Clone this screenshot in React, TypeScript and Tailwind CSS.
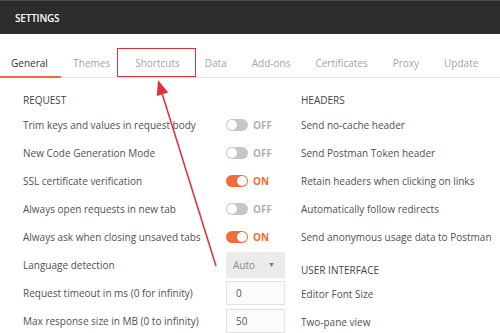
import React from 'react';

const tabs = ['General', 'Themes', 'Shortcuts', 'Data', 'Add-ons', 'Certificates', 'Proxy', 'Update'];

const requestRows: { label: string; on: boolean }[] = [
  { label: 'Trim keys and values in request body', on: false },
  { label: 'New Code Generation Mode', on: false },
  { label: 'SSL certificate verification', on: true },
  { label: 'Always open requests in new tab', on: false },
  { label: 'Always ask when closing unsaved tabs', on: true },
];

const headerRows = [
  'Send no-cache header',
  'Send Postman Token header',
  'Retain headers when clicking on links',
  'Automatically follow redirects',
  'Send anonymous usage data to Postman',
];

const Toggle: React.FC<{ on: boolean }> = ({ on }) => (
  <div className="flex items-center gap-[5px]">
    <div
      className={
        on
          ? 'w-[22px] h-[12px] rounded-full bg-[#f26b3a] flex items-center justify-end px-[1px]'
          : 'w-[22px] h-[12px] rounded-full bg-[#c6c6c6] flex items-center justify-start px-[1px]'
      }
    >
      <div className="w-[10px] h-[10px] rounded-full bg-white" />
    </div>
    <span className={on ? 'text-[10px] font-bold text-[#f26b3a]' : 'text-[10px] font-bold text-[#b0b0b0]'}>
      {on ? 'ON' : 'OFF'}
    </span>
  </div>
);

export default function App() {
  return (
    <div className="relative w-[500px] h-[333px] overflow-hidden bg-white font-['Open_Sans',sans-serif] text-[10px] text-[#505050]">
      {/* title bar */}
      <div className="h-[34px] bg-[#2d2d2d] border-t border-[#4a4a4a] flex items-center pl-[15px] pt-[1px]">
        <span className="text-white font-semibold text-[10px] tracking-[-0.2px]">SETTINGS</span>
      </div>

      {/* tabs */}
      <div className="h-[44px] border-b border-[#e4e4e4] flex items-end">
        {tabs.map((t, i) => (
          <div
            key={t}
            className={
              i === 0
                ? 'h-[43px] pl-[11px] pr-[13px] flex items-center pt-[15px] whitespace-nowrap border-b-2 border-[#f26b3a] text-[#333] mb-[-1px]'
                : 'h-[43px] px-[12.5px] flex items-center pt-[15px] whitespace-nowrap text-[#a3a3a3]'
            }
          >
            {t}
          </div>
        ))}
      </div>

      {/* body */}
      <div className="flex pt-[12px]">
        <div className="w-[301px] shrink-0 pl-[23px] flex flex-col">
          <div className="h-[21px] flex items-center text-[#444]">REQUEST</div>
          {requestRows.map((r) => (
            <div key={r.label} className="h-[28px] flex items-center">
              <span className="w-[203px]">{r.label}</span>
              <Toggle on={r.on} />
            </div>
          ))}
          <div className="h-[28px] flex items-center">
            <span className="w-[203px]">Language detection</span>
            <div className="w-[59px] h-[26px] bg-[#ebebeb] flex items-center justify-between pl-[7px] pr-[10px] text-[#8a8a8a]">
              <span>Auto</span>
              <span className="text-[7px] text-[#777]">▼</span>
            </div>
          </div>
          <div className="h-[28px] flex items-center">
            <span className="w-[203px]">Request timeout in ms (0 for infinity)</span>
            <div className="w-[59px] h-[24px] border border-[#e2e2e2] bg-[#fbfbfb] flex items-center pl-[9px] text-[#555]">0</div>
          </div>
          <div className="h-[28px] flex items-center">
            <span className="w-[203px]">Max response size in MB (0 to infinity)</span>
            <div className="w-[59px] h-[24px] border border-[#e2e2e2] bg-[#fbfbfb] flex items-center pl-[9px] text-[#555]">50</div>
          </div>
        </div>

        <div className="flex flex-col whitespace-nowrap">
          <div className="h-[21px] flex items-center text-[#444]">HEADERS</div>
          {headerRows.map((h) => (
            <div key={h} className="h-[28px] flex items-center">{h}</div>
          ))}
          <div className="h-[29px] flex items-center pt-[10px] text-[#444]">USER INTERFACE</div>
          <div className="h-[28px] flex items-center">Editor Font Size</div>
          <div className="h-[28px] flex items-center">Two-pane view</div>
        </div>
      </div>

      {/* annotation */}
      <div className="absolute left-[117px] top-[48px] w-[79px] h-[29px] border-[1.5px] border-[#e0313a]" />
      <svg className="absolute left-0 top-0" width="500" height="333" viewBox="0 0 500 333">
        <line x1="216" y1="266" x2="161" y2="90" stroke="#e0313a" strokeWidth="1.5" />
        <polygon points="158,80 168.2,92.5 156.8,96.1" fill="#e0313a" />
      </svg>
    </div>
  );
}
